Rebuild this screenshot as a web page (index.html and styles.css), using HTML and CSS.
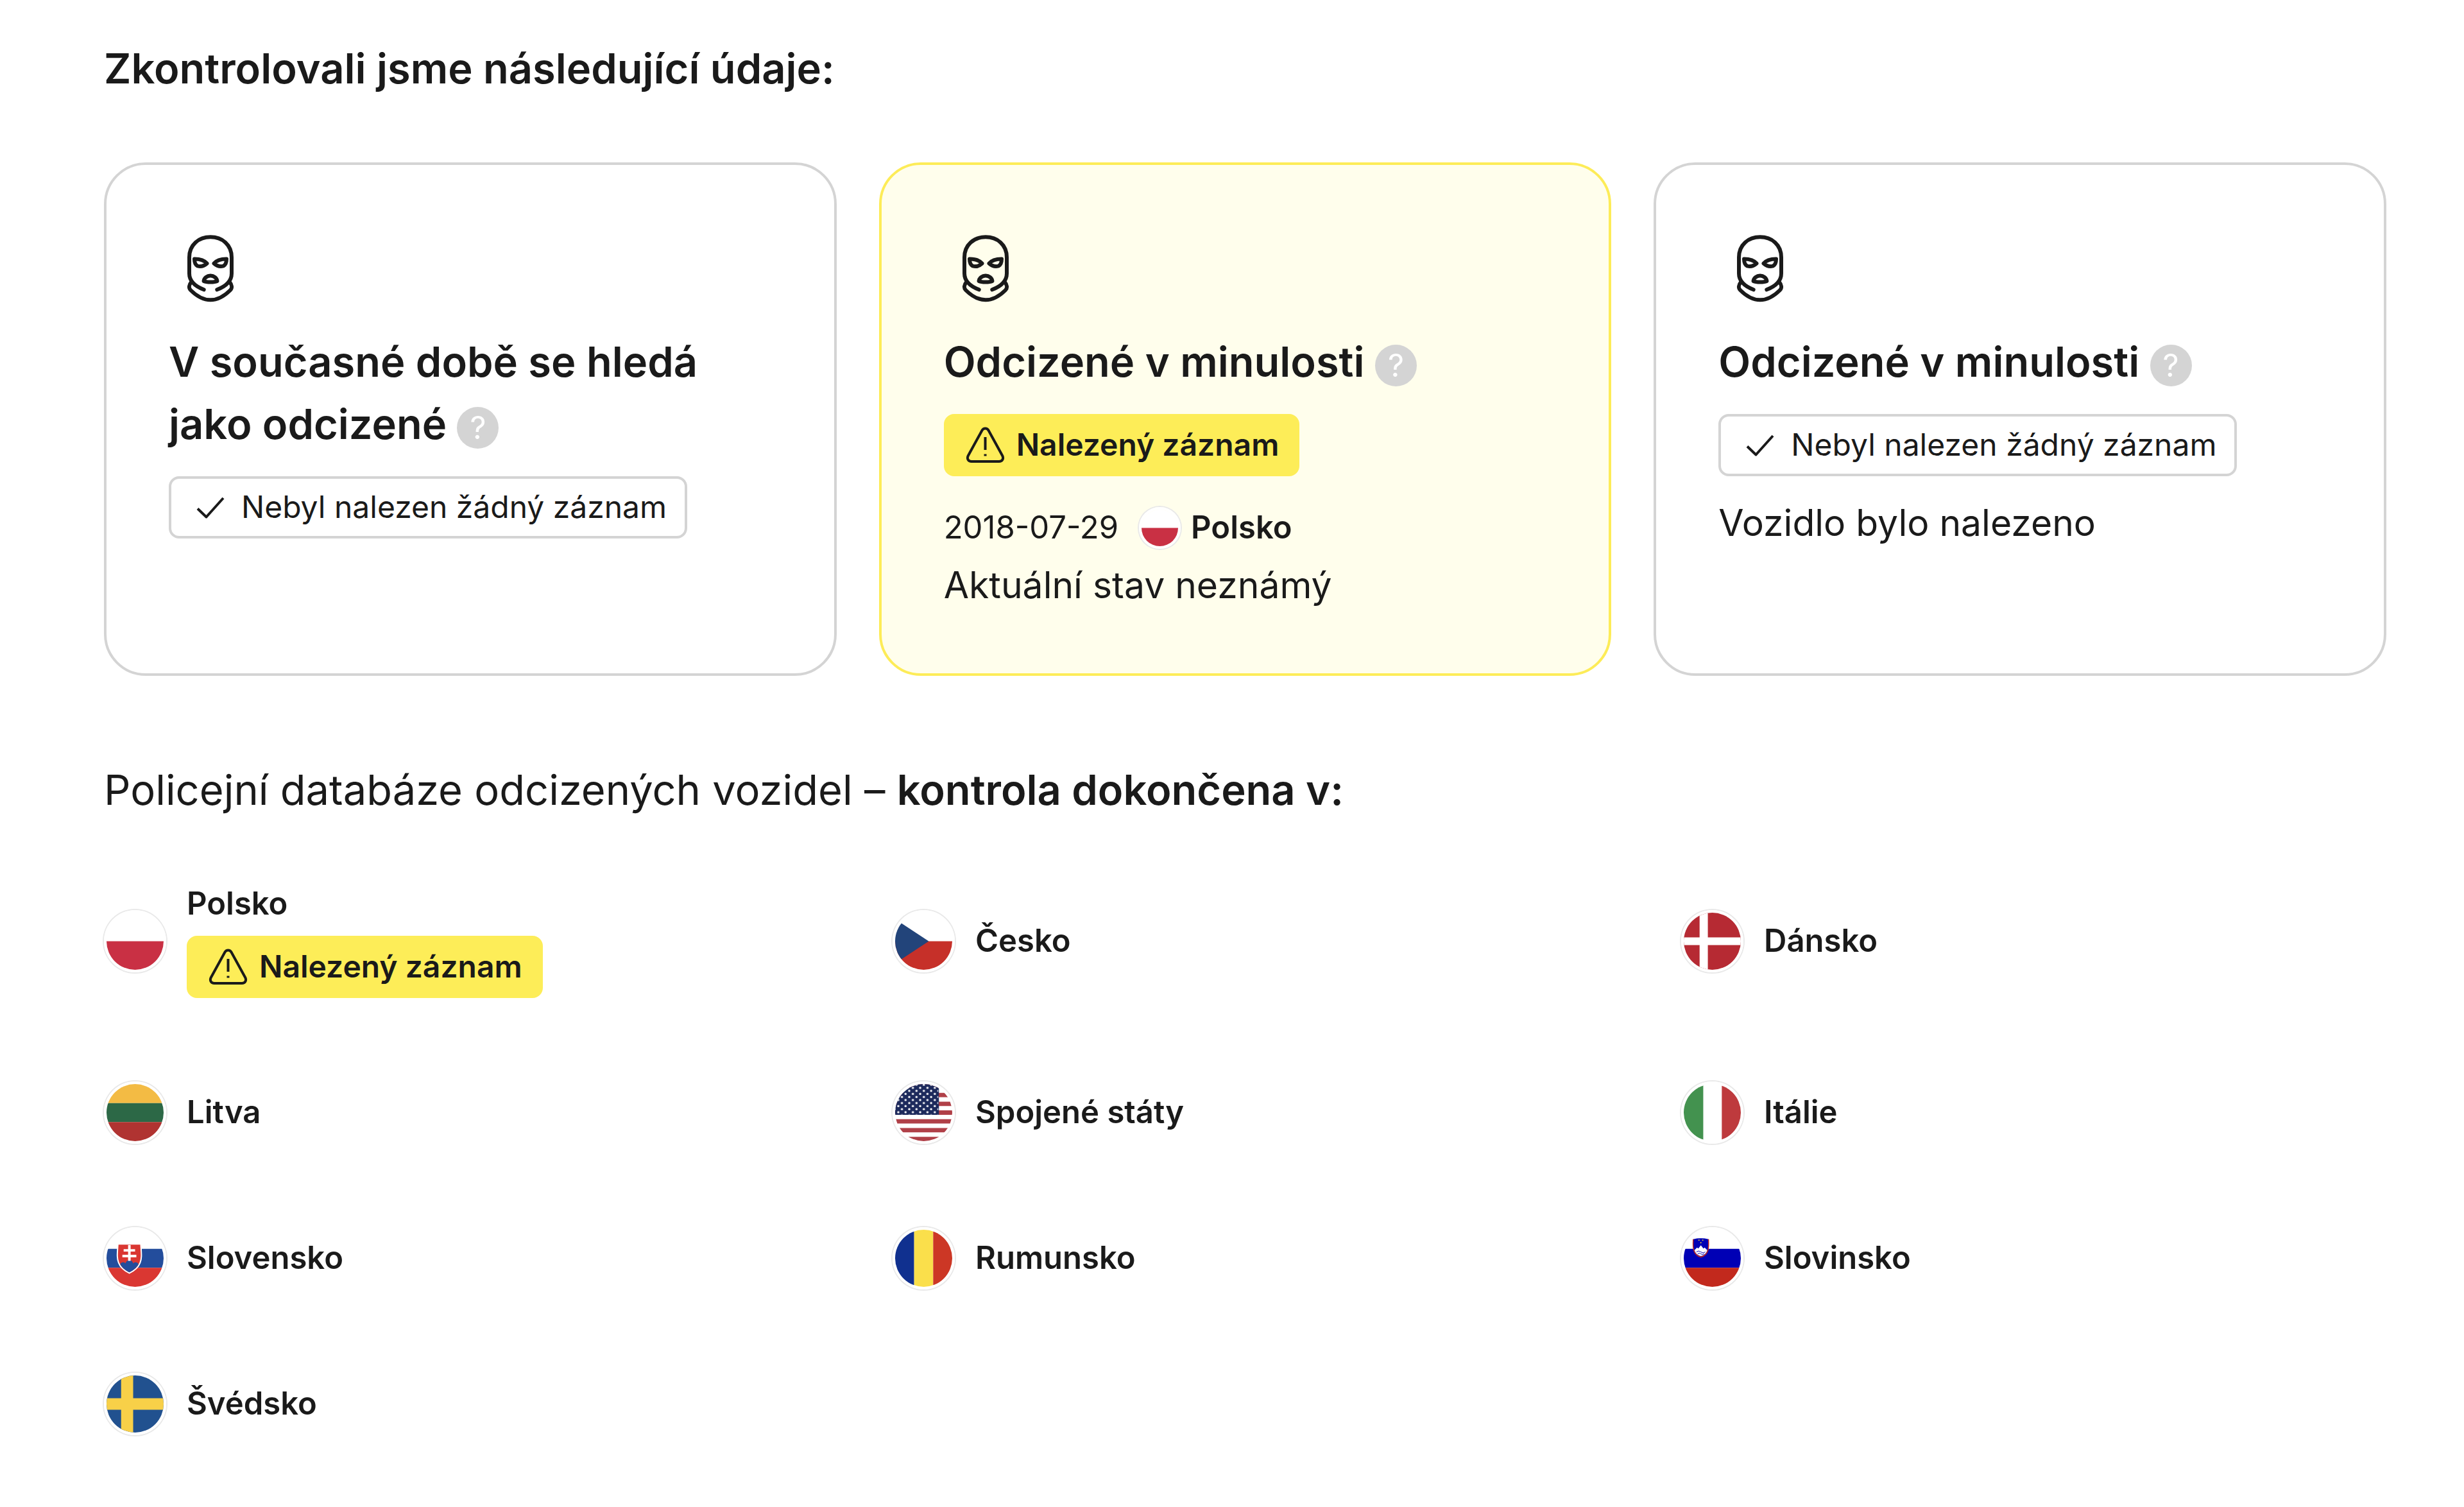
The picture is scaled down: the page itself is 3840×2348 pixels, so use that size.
FILE: index.html
```html
<!DOCTYPE html>
<html lang="cs">
<head>
  <meta charset="UTF-8">
  <title>Kontrola odcizení</title>
  <link rel="stylesheet" href="styles.css">
</head>
<body>
<!-- shared icons -->
<svg class="sprite" aria-hidden="true">
  <symbol id="mask" viewBox="0 0 130 130">
    <path d="M54.7 97.3C41 92 32 84 32 72V47C32 27 47 15.3 65 15.3S98 27 98 47V72C98 84 89 92 75.3 97.3"/>
    <path d="M35.5 85C31 90 31 95 34 98C42 106 52 113.3 65 113.3S88 106 96 98C99 95 99 90 94.5 85"/>
    <path d="M40 49.5C48 49.5 55 51 59.5 56.5C55 60.5 50 62 45 60.5C41 58.5 40 54 40 49.5Z"/>
    <path d="M90 49.5C82 49.5 75 51 70.5 56.5C75 60.5 80 62 85 60.5C89 58.5 90 54 90 49.5Z"/>
    <path d="M54.5 84C55 79 60 75.5 65 75.5S75 79 75.5 84C71 86 59 86 54.5 84Z"/>
  </symbol>
  <symbol id="check" viewBox="0 0 65 65">
    <path d="M13 34.5L26.5 47.5L53 18"/>
  </symbol>
  <symbol id="warning" viewBox="0 0 65 65">
    <path d="M27.5 9.5L5.8 49C3.5 53.5 6 58 11 58H54C59 58 61.5 53.5 59.2 49L37.5 9.5C35.2 5.5 29.8 5.5 27.5 9.5Z"/>
    <path d="M32.5 20V40M32.5 46.5V49.5"/>
  </symbol>
  <symbol id="pl" viewBox="0 0 90 90">
    <path fill="#fff" d="M0 0h90v90H0z"/>
    <path fill="#c93044" d="M0 45h90v45H0z"/>
  </symbol>
</svg>

<main class="report">
  <h2 class="heading">Zkontrolovali jsme následující údaje:</h2>

  <div class="cards">
    <article class="card">
      <svg class="card-icon"><use href="#mask"/></svg>
      <h3 class="card-title">V současné době se hledá jako&nbsp;odcizené <button class="help" type="button">?</button></h3>
      <div class="badge"><svg class="badge-icon"><use href="#check"/></svg><span class="label">Nebyl nalezen žádný záznam</span></div>
    </article>

    <article class="card found">
      <svg class="card-icon"><use href="#mask"/></svg>
      <h3 class="card-title">Odcizené v minulosti <button class="help" type="button">?</button></h3>
      <div class="badge badge-found"><svg class="badge-icon"><use href="#warning"/></svg><span class="label">Nalezený záznam</span></div>
      <div class="record">
        <span class="label date">2018-07-29</span>
        <svg class="flag flag-small"><use href="#pl"/></svg>
        <strong class="label">Polsko</strong>
      </div>
      <p class="status">Aktuální stav neznámý</p>
    </article>

    <article class="card">
      <svg class="card-icon"><use href="#mask"/></svg>
      <h3 class="card-title">Odcizené v minulosti <button class="help" type="button">?</button></h3>
      <div class="badge"><svg class="badge-icon"><use href="#check"/></svg><span class="label">Nebyl nalezen žádný záznam</span></div>
      <p class="status after-badge">Vozidlo bylo nalezeno</p>
    </article>
  </div>

  <h2 class="heading light">Policejní databáze odcizených vozidel – <strong>kontrola dokončena v:</strong></h2>

  <ul class="countries">
    <li class="country">
      <svg class="flag"><use href="#pl"/></svg>
      <div class="country-info">
        <strong class="label">Polsko</strong>
        <div class="badge badge-found"><svg class="badge-icon"><use href="#warning"/></svg><span class="label">Nalezený záznam</span></div>
      </div>
    </li>
    <li class="country">
      <svg class="flag" viewBox="0 0 90 90">
        <path fill="#fff" d="M0 0h90v45H0z"/>
        <path fill="#c63029" d="M0 45h90v45H0z"/>
        <path fill="#22447a" d="M0 10L53 45L0 80z"/>
      </svg>
      <strong class="label">Česko</strong>
    </li>
    <li class="country">
      <svg class="flag" viewBox="0 0 90 90">
        <path fill="#b62a33" d="M0 0h90v90H0z"/>
        <path fill="#fff" d="M25 0h13v90H25zM0 39h90v12H0z"/>
      </svg>
      <strong class="label">Dánsko</strong>
    </li>
    <li class="country">
      <svg class="flag" viewBox="0 0 90 90">
        <path fill="#f3bb44" d="M0 0h90v30H0z"/>
        <path fill="#2c6846" d="M0 30h90v30H0z"/>
        <path fill="#b03331" d="M0 60h90v30H0z"/>
      </svg>
      <strong class="label">Litva</strong>
    </li>
    <li class="country">
      <svg class="flag" viewBox="0 0 90 90">
        <defs>
          <pattern id="stars" x="2" y="-1" width="11.5" height="9.6" patternUnits="userSpaceOnUse">
            <circle cx="3" cy="7" r="1.7" fill="#fff"/>
            <circle cx="8.75" cy="2.2" r="1.7" fill="#fff"/>
          </pattern>
        </defs>
        <path fill="#fff" d="M0 0h90v90H0z"/>
        <path stroke="#b04048" stroke-width="6.9" d="M0 3.5h90M0 17.3h90M0 31.2h90M0 45h90M0 58.8h90M0 72.7h90M0 86.5h90"/>
        <path fill="#1d2a5c" d="M0 0h69v48.5H0z"/>
        <path fill="url(#stars)" d="M0 0h68v48H0z"/>
      </svg>
      <strong class="label">Spojené státy</strong>
    </li>
    <li class="country">
      <svg class="flag" viewBox="0 0 90 90">
        <path fill="#43924f" d="M0 0h31v90H0z"/>
        <path fill="#fff" d="M31 0h29v90H31z"/>
        <path fill="#be3a3d" d="M60 0h30v90H60z"/>
      </svg>
      <strong class="label">Itálie</strong>
    </li>
    <li class="country">
      <svg class="flag" viewBox="0 0 90 90">
        <path fill="#fff" d="M0 0h90v30H0z"/>
        <path fill="#234d9c" d="M0 30h90v30H0z"/>
        <path fill="#da3732" d="M0 60h90v30H0z"/>
        <path fill="#da3732" stroke="#fff" stroke-width="2" d="M18 22.5H54C55 38 56 44 53 52C50 60 43 65 36 68.5C29 65 22 60 19 52C16 44 17 38 18 22.5Z"/>
        <path fill="#234d9c" d="M21.5 54C24 50.5 28 51 30 53C31 49 34 48 36 48S41 49 42 53C44 51 48 50.5 50.5 54C47.5 60 42 64 36 67C30 64 24.5 60 21.5 54Z"/>
        <path stroke="#fff" stroke-width="4" d="M36 24V49M27 32.5H45M25 41.5H47"/>
      </svg>
      <strong class="label">Slovensko</strong>
    </li>
    <li class="country">
      <svg class="flag" viewBox="0 0 90 90">
        <path fill="#10308f" d="M0 0h30v90H0z"/>
        <path fill="#fadf4b" d="M30 0h30v90H30z"/>
        <path fill="#cc3725" d="M60 0h30v90H60z"/>
      </svg>
      <strong class="label">Rumunsko</strong>
    </li>
    <li class="country">
      <svg class="flag" viewBox="0 0 90 90">
        <path fill="#fff" d="M0 0h90v30H0z"/>
        <path fill="#0000b5" d="M0 30h90v30H0z"/>
        <path fill="#c2291d" d="M0 60h90v30H0z"/>
        <path fill="#0000b5" d="M15 15Q27 12 39 15C39.5 25 41 39 27 43C13 39 14.5 25 15 15Z"/>
        <path fill="none" stroke="#c2291d" stroke-width="1.5" d="M15 15C14.5 25 13 39 27 43C41 39 39.5 25 39 15"/>
        <path fill="#fff" d="M17 32L21 28L23 29.5L27 24.5L31 29.5L33 28L37 32C36 37 32 40 27 41.5C22 40 18 37 17 32Z"/>
        <path fill="none" stroke="#0000b5" d="M20 35q3.5-3 7 0t7 0M22 38q2.5-2 5 0t5 0"/>
        <circle cx="24" cy="16.5" r="1" fill="#e8d040"/>
        <circle cx="30" cy="16.5" r="1" fill="#e8d040"/>
        <circle cx="27" cy="20.5" r="1" fill="#e8d040"/>
      </svg>
      <strong class="label">Slovinsko</strong>
    </li>
    <li class="country">
      <svg class="flag" viewBox="0 0 90 90">
        <path fill="#21518f" d="M0 0h90v90H0z"/>
        <path fill="#f8d048" d="M23 0h19v90H23zM0 36h90v18H0z"/>
      </svg>
      <strong class="label">Švédsko</strong>
    </li>
  </ul>
</main>
</body>
</html>
```

FILE: styles.css
```css
* {
  padding: 0;
  margin: 0;
  box-sizing: border-box;
  list-style: none;
}

body {
  background-color: #fff;
  color: #1a1a1a;
  font-family: Inter, "Liberation Sans", sans-serif;
  font-size: 49px;
  line-height: 61px;
}

strong {
  font-weight: 600;
}

.sprite {
  position: absolute;
  width: 0;
  height: 0;
}

.report {
  padding: 58px 121px 97px 162px;
}

.heading {
  font-size: 65px;
  line-height: 97px;
  font-weight: 600;
}

.light {
  font-weight: 400;
}

/* cards */
.cards {
  display: grid;
  grid-template-columns: repeat(3, 1fr);
  gap: 66px;
  margin: 98px 0 129px;
}

.card {
  padding: 97px;
  border: 4px solid #d4d4d4;
  border-radius: 65px;
}

.found {
  background-color: #fffeec;
  border-color: #fdec58;
}

.card-icon {
  display: block;
  width: 130px;
  height: 130px;
  margin-bottom: 31px;
  fill: none;
  stroke: #1a1a1a;
  stroke-width: 6;
  stroke-linecap: round;
  stroke-linejoin: round;
}

.card-title {
  margin-bottom: 33px;
  font-size: 65px;
  line-height: 97px;
  font-weight: 600;
}

.help {
  width: 65px;
  height: 65px;
  border: 0;
  border-radius: 50%;
  background-color: #d4d4d4;
  color: #fff;
  font: 400 49px/65px Inter, "Liberation Sans", sans-serif;
  text-align: center;
  cursor: pointer;
}

.badge {
  display: flex;
  align-items: center;
  gap: 16px;
  width: fit-content;
  height: 97px;
  padding: 0 28px;
  border: 4px solid #d4d4d4;
  border-radius: 16px;
  font-size: 48px;
}

.badge-found {
  background-color: #fded58;
  border-color: #fded58;
  font-weight: 600;
}

.badge-icon {
  width: 65px;
  height: 65px;
  fill: none;
  stroke: #1a1a1a;
  stroke-width: 4;
  stroke-linejoin: round;
}

.label {
  padding-bottom: 2px;
}

.record {
  display: flex;
  align-items: center;
  gap: 16px;
  height: 97px;
  margin-top: 32px;
}

.date {
  margin-right: 16px;
}

.status {
  font-size: 57px;
  line-height: 81px;
}

.after-badge {
  margin-top: 32px;
}

/* countries */
.countries {
  display: grid;
  grid-template-columns: repeat(3, 1fr);
  gap: 130px;
  margin-top: 98px;
}

.country {
  display: flex;
  align-items: center;
  gap: 32px;
}

.country-info .badge {
  margin-top: 20px;
}

.flag {
  flex: none;
  width: 97px;
  height: 97px;
  border: 4px solid #fff;
  border-radius: 50%;
  box-shadow: 0 0 0 2px #e9e9e9;
}

.flag-small {
  width: 65px;
  height: 65px;
}
```
